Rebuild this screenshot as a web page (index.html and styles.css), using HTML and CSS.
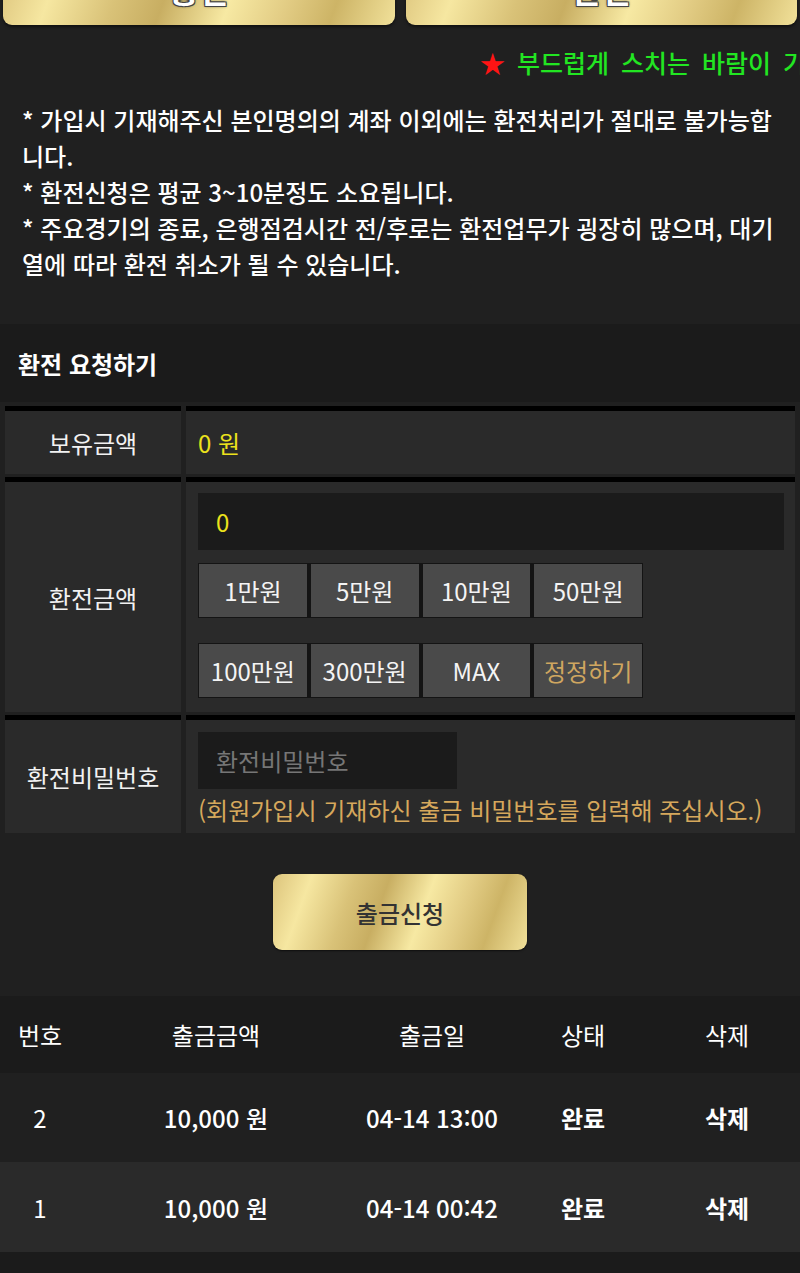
FILE: index.html
```html
<!DOCTYPE html>
<html lang="ko">
<head>
<meta charset="utf-8">
<title>환전</title>
<link rel="stylesheet" href="styles.css">
</head>
<body>
<div class="tabs">
  <a class="tab gold">충전</a>
  <a class="tab gold">환전</a>
</div>

<div class="marquee"><span class="star">★</span> 부드럽게 스치는 바람이 기분 좋은 하루 되세요</div>

<div class="notice">
  <p>* 가입시 기재해주신 본인명의의 계좌 이외에는 환전처리가 절대로 불가능합니다.</p>
  <p>* 환전신청은 평균 3~10분정도 소요됩니다.</p>
  <p>* 주요경기의 종료, 은행점검시간 전/후로는 환전업무가 굉장히 많으며, 대기열에 따라 환전 취소가 될 수 있습니다.</p>
</div>

<section class="request">
  <h2 class="request-title">환전 요청하기</h2>
  <div class="form">
    <div class="label row1">보유금액</div>
    <div class="value row1"><span class="money">0 원</span></div>

    <div class="label">환전금액</div>
    <div class="value amount">
      <div class="input amount-input">0</div>
      <div class="btn-group">
        <span class="qbtn">1만원</span>
        <span class="qbtn">5만원</span>
        <span class="qbtn">10만원</span>
        <span class="qbtn">50만원</span>
      </div>
      <div class="btn-group">
        <span class="qbtn">100만원</span>
        <span class="qbtn">300만원</span>
        <span class="qbtn">MAX</span>
        <span class="qbtn reset">정정하기</span>
      </div>
    </div>

    <div class="label">환전비밀번호</div>
    <div class="value pw">
      <div class="input pw-input">환전비밀번호</div>
      <p class="hint">(회원가입시 기재하신 출금 비밀번호를 입력해 주십시오.)</p>
    </div>
  </div>
</section>

<div class="submit-wrap">
  <a class="submit gold">출금신청</a>
</div>

<table class="history">
  <colgroup>
    <col style="width:80px"><col style="width:272px"><col style="width:160px"><col style="width:142px"><col style="width:146px">
  </colgroup>
  <thead>
    <tr><th>번호</th><th>출금금액</th><th>출금일</th><th>상태</th><th>삭제</th></tr>
  </thead>
  <tbody>
    <tr><td>2</td><td class="med">10,000 원</td><td class="med">04-14 13:00</td><td class="b">완료</td><td class="b">삭제</td></tr>
    <tr class="alt"><td>1</td><td class="med">10,000 원</td><td class="med">04-14 00:42</td><td class="b">완료</td><td class="b">삭제</td></tr>
  </tbody>
</table>
<div class="footer"></div>
</body>
</html>
```

FILE: styles.css
```css
* { box-sizing: border-box; }
html, body { margin: 0; padding: 0; }
body {
  background: #202020;
  color: #fff;
  font-family: "Noto Sans CJK KR", "Noto Sans", sans-serif;
  font-size: 24px;
  overflow: hidden;
}

.gold {
  background: linear-gradient(110deg, #dcc47c 0%, #f6e7a1 14%, #d9c278 30%, #c8ae62 42%, #f7e9a3 58%, #e2cc84 72%, #cdb466 84%, #f1e19a 100%);
}

.tabs {
  display: flex;
  gap: 11px;
  padding: 0 3px;
  margin-top: -35px;
}
.tab {
  flex: 1;
  height: 60px;
  border-radius: 0 0 9px 9px;
  display: flex;
  align-items: center;
  justify-content: center;
  padding-bottom: 12px;
  font-size: 32px;
  font-weight: 700;
  color: #fff;
  text-shadow: -1px -1px 0 #444, 1px -1px 0 #444, -1px 1px 0 #444, 1px 1px 0 #444, 0 0 3px #222;
  box-shadow: 0 2px 3px rgba(0,0,0,.5);
}

.marquee {
  margin-top: 22px;
  height: 30px;
  line-height: 30px;
  white-space: nowrap;
  overflow: hidden;
  padding-left: 480px;
  color: #22e622;
  font-weight: 500;
  font-size: 25px;
  word-spacing: 5px;
}
.star { color: #ff1414; font-size: 25px; }

.notice {
  margin-top: 25px;
  padding: 0 22px;
  line-height: 36px;
  font-weight: 500;
  font-size: 24px;
}
.notice p { margin: 0; }

.request { margin-top: 42px; }
.request-title {
  margin: 0;
  height: 78px;
  background: #1b1b1b;
  font-size: 24px;
  font-weight: 700;
  padding-left: 18px;
  display: flex;
  align-items: center;
}

.form {
  display: grid;
  grid-template-columns: 176px 1fr;
  column-gap: 5px;
  row-gap: 3px;
  padding: 4px 5px 0;
}
.label, .value {
  background: #2a2a2a;
  border-top: 5px solid #000;
}
.label {
  display: flex;
  align-items: center;
  justify-content: center;
  color: #f2f2f2;
}
.row1 { height: 68px; }
.value.row1 {
  display: flex;
  align-items: center;
  padding-left: 12px;
}
.money { color: #ece21c; }

.value.amount { padding: 11px 11px 14px 12px; }
.input {
  background: #1b1b1b;
  height: 57px;
  display: flex;
  align-items: center;
  padding-left: 18px;
}
.amount-input { color: #ece21c; }

.btn-group {
  display: flex;
  gap: 4px;
  width: 445px;
  padding: 1px;
  background: #141414;
  margin-top: 13px;
}
.btn-group + .btn-group { margin-top: 25px; }
.qbtn {
  flex: 1;
  height: 53px;
  background: #4a4a4a;
  color: #f4f4f4;
  display: flex;
  align-items: center;
  justify-content: center;
  font-size: 24px;
  white-space: nowrap;
}
.qbtn.reset { color: #cfa660; }

.value.pw { padding: 12px 12px 8px 12px; }
.pw-input {
  width: 259px;
  color: #767676;
}
.hint {
  margin: 6px 0 0;
  color: #d6a85c;
  line-height: 30px;
  font-size: 24px;
  white-space: nowrap;
}

.submit-wrap {
  display: flex;
  justify-content: center;
  margin-top: 41px;
}
.submit {
  width: 254px;
  height: 76px;
  border-radius: 9px;
  display: flex;
  align-items: center;
  justify-content: center;
  color: #333;
  font-size: 24px;
  font-weight: 500;
  box-shadow: 0 1px 2px rgba(0,0,0,.6);
}

.history {
  margin-top: 46px;
  width: 800px;
  border-collapse: collapse;
  table-layout: fixed;
}
.history th, .history td {
  text-align: center;
  padding: 0;
  font-size: 24px;
}
.history thead tr { background: #1b1b1b; height: 77px; }
.history th { font-weight: 400; }
.history tbody tr { background: #202020; height: 89px; }
.history tbody tr.alt { background: #2a2a2a; height: 90px; }
.history td.med { font-weight: 500; }
.history td.b { font-weight: 700; }

.footer { height: 60px; background: #1b1b1b; }
```
